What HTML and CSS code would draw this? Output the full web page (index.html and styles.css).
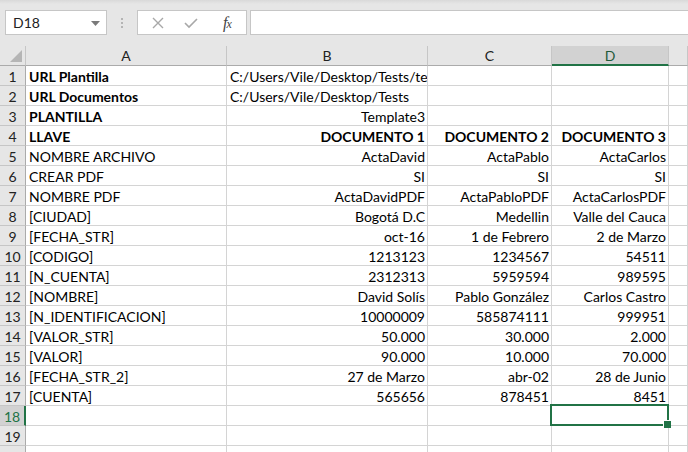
FILE: index.html
```html
<!DOCTYPE html>
<html>
<head>
<meta charset="utf-8">
<link rel="stylesheet" href="styles.css">
</head>
<body>
<div class="app">
  <div class="fbar">
    <div class="namebox">
      <span class="name">D18</span>
      <svg class="caret" width="9" height="5" viewBox="0 0 9 5"><path d="M0 0H9L4.5 5Z" fill="#7a7a7a"/></svg>
    </div>
    <div class="grip"><span></span><span></span><span></span></div>
    <div class="btns">
      <svg class="ico" width="14" height="14" viewBox="0 0 14 14"><path d="M2 2L12 12M12 2L2 12" stroke="#a8a8a8" stroke-width="1.4" fill="none"/></svg>
      <svg class="ico" width="16" height="14" viewBox="0 0 16 14"><path d="M2 7L6 11L14 3" stroke="#a8a8a8" stroke-width="1.6" fill="none"/></svg>
      <span class="fx">f<i>x</i></span>
    </div>
    <div class="input"></div>
  </div>
  <div class="sheet">
    <div class="corner"><svg width="12" height="12" viewBox="0 0 12 12"><path d="M12 0V12H0Z" fill="#b5b5b5"/></svg></div>
    <div class="ch">A</div><div class="ch">B</div><div class="ch">C</div><div class="ch sel">D</div><div class="ch"></div>

    <div class="rh">1</div><div class="c b">URL Plantilla</div><div class="c">C:/Users/Vile/Desktop/Tests/te</div><div class="c"></div><div class="c"></div><div class="c"></div>
    <div class="rh">2</div><div class="c b">URL Documentos</div><div class="c">C:/Users/Vile/Desktop/Tests</div><div class="c"></div><div class="c"></div><div class="c"></div>
    <div class="rh">3</div><div class="c b">PLANTILLA</div><div class="c r">Template3</div><div class="c"></div><div class="c"></div><div class="c"></div>
    <div class="rh">4</div><div class="c b">LLAVE</div><div class="c r b">DOCUMENTO 1</div><div class="c r b">DOCUMENTO 2</div><div class="c r b">DOCUMENTO 3</div><div class="c"></div>
    <div class="rh">5</div><div class="c">NOMBRE ARCHIVO</div><div class="c r">ActaDavid</div><div class="c r">ActaPablo</div><div class="c r">ActaCarlos</div><div class="c"></div>
    <div class="rh">6</div><div class="c">CREAR PDF</div><div class="c r">SI</div><div class="c r">SI</div><div class="c r">SI</div><div class="c"></div>
    <div class="rh">7</div><div class="c">NOMBRE PDF</div><div class="c r">ActaDavidPDF</div><div class="c r">ActaPabloPDF</div><div class="c r">ActaCarlosPDF</div><div class="c"></div>
    <div class="rh">8</div><div class="c">[CIUDAD]</div><div class="c r">Bogotá D.C</div><div class="c r">Medellin</div><div class="c r">Valle del Cauca</div><div class="c"></div>
    <div class="rh">9</div><div class="c">[FECHA_STR]</div><div class="c r">oct-16</div><div class="c r">1 de Febrero</div><div class="c r">2 de Marzo</div><div class="c"></div>
    <div class="rh">10</div><div class="c">[CODIGO]</div><div class="c r">1213123</div><div class="c r">1234567</div><div class="c r">54511</div><div class="c"></div>
    <div class="rh">11</div><div class="c">[N_CUENTA]</div><div class="c r">2312313</div><div class="c r">5959594</div><div class="c r">989595</div><div class="c"></div>
    <div class="rh">12</div><div class="c">[NOMBRE]</div><div class="c r">David Solís</div><div class="c r">Pablo González</div><div class="c r">Carlos Castro</div><div class="c"></div>
    <div class="rh">13</div><div class="c">[N_IDENTIFICACION]</div><div class="c r">10000009</div><div class="c r">585874111</div><div class="c r">999951</div><div class="c"></div>
    <div class="rh">14</div><div class="c">[VALOR_STR]</div><div class="c r">50.000</div><div class="c r">30.000</div><div class="c r">2.000</div><div class="c"></div>
    <div class="rh">15</div><div class="c">[VALOR]</div><div class="c r">90.000</div><div class="c r">10.000</div><div class="c r">70.000</div><div class="c"></div>
    <div class="rh">16</div><div class="c">[FECHA_STR_2]</div><div class="c r">27 de Marzo</div><div class="c r">abr-02</div><div class="c r">28 de Junio</div><div class="c"></div>
    <div class="rh">17</div><div class="c">[CUENTA]</div><div class="c r">565656</div><div class="c r">878451</div><div class="c r">8451</div><div class="c"></div>
    <div class="rh sel">18</div><div class="c"></div><div class="c"></div><div class="c"></div><div class="c active"></div><div class="c"></div>
    <div class="rh">19</div><div class="c"></div><div class="c"></div><div class="c"></div><div class="c"></div><div class="c"></div>
    <div class="rh"></div><div class="c"></div><div class="c"></div><div class="c"></div><div class="c"></div><div class="c"></div>
  </div>
</div>
</body>
</html>
```
FILE: styles.css
```css
* { box-sizing: border-box; }
html, body { margin: 0; padding: 0; }
body {
  width: 688px;
  height: 452px;
  overflow: hidden;
  background: #fff;
  font-family: Lato, "Liberation Sans", sans-serif;
  font-size: 14px;
  color: #000;
}
.app { display: flex; flex-direction: column; }
.fbar {
  height: 46px;
  background: linear-gradient(#d9d9d9 0px, #e6e6e6 4px, #e6e6e6);
  display: flex;
  align-items: flex-start;
  padding: 10px 0 0 5px;
}
.namebox {
  width: 102px;
  height: 25px;
  background: #fff;
  border: 1px solid #c6c6c6;
  display: flex;
  align-items: center;
  justify-content: space-between;
  padding: 0 6px 0 7px;
}
.name { font-size: 14px; color: #222; }
.caret { margin-top: 1px; }
.grip {
  width: 30px;
  height: 25px;
  display: flex;
  flex-direction: column;
  align-items: center;
  justify-content: center;
  gap: 2px;
}
.grip span { width: 2px; height: 2px; background: #b4b4b4; display: block; }
.btns {
  width: 110px;
  height: 25px;
  background: #fff;
  border: 1px solid #c6c6c6;
  display: flex;
  align-items: center;
  padding: 0 0 0 13px;
}
.btns .ico { margin-right: 18px; }
.btns .ico + .ico { margin-right: 24px; }
.fx {
  font-family: "Liberation Serif", serif;
  font-style: italic;
  font-size: 16px;
  color: #444;
  letter-spacing: -1px;
}
.fx i { font-size: 12px; }
.input {
  margin-left: 3px;
  flex: 1;
  height: 25px;
  background: #fff;
  border: 1px solid #c6c6c6;
  border-right: none;
}
.sheet {
  display: grid;
  grid-template-columns: 26px 201px 201px 124px 117px 1fr;
  grid-auto-rows: 20px;
}
.corner, .ch, .rh { background: #e6e6e6; color: #222; }
.corner {
  border-right: 1px solid #c6c6c6;
  border-bottom: 1px solid #ababab;
  display: flex;
  align-items: flex-end;
  justify-content: flex-end;
  padding: 0 3px 3px 0;
}
.ch {
  border-right: 1px solid #c6c6c6;
  border-bottom: 1px solid #ababab;
  display: flex;
  align-items: center;
  justify-content: center;
  font-size: 14px;
}
.ch.sel {
  background: #d2d2d2;
  border-bottom: 2px solid #217346;
  color: #1f5a3a;
}
.rh {
  border-right: 1px solid #ababab;
  border-bottom: 1px solid #c6c6c6;
  display: flex;
  align-items: center;
  justify-content: center;
  font-size: 14px;
  padding-top: 1px;
}
.rh.sel {
  background: #d2d2d2;
  border-right: 2px solid #217346;
  color: #217346;
}
.c {
  border-right: 1px solid #d4d4d4;
  border-bottom: 1px solid #d4d4d4;
  padding: 1px 3px 0 3px;
  display: flex;
  align-items: center;
  white-space: nowrap;
  overflow: hidden;
}
.c.r { justify-content: flex-end; padding-right: 2px; }
.c.b { font-weight: bold; }
.c.active { position: relative; overflow: visible; }
.c.active::before {
  content: "";
  position: absolute;
  left: -2px;
  top: -2px;
  right: -1px;
  bottom: -1px;
  border: 2px solid #217346;
}
.c.active::after {
  content: "";
  position: absolute;
  right: -3px;
  bottom: -3px;
  width: 7px;
  height: 7px;
  background: #217346;
  border: 1px solid #fff;
  border-right: none;
  border-bottom: none;
}
```
